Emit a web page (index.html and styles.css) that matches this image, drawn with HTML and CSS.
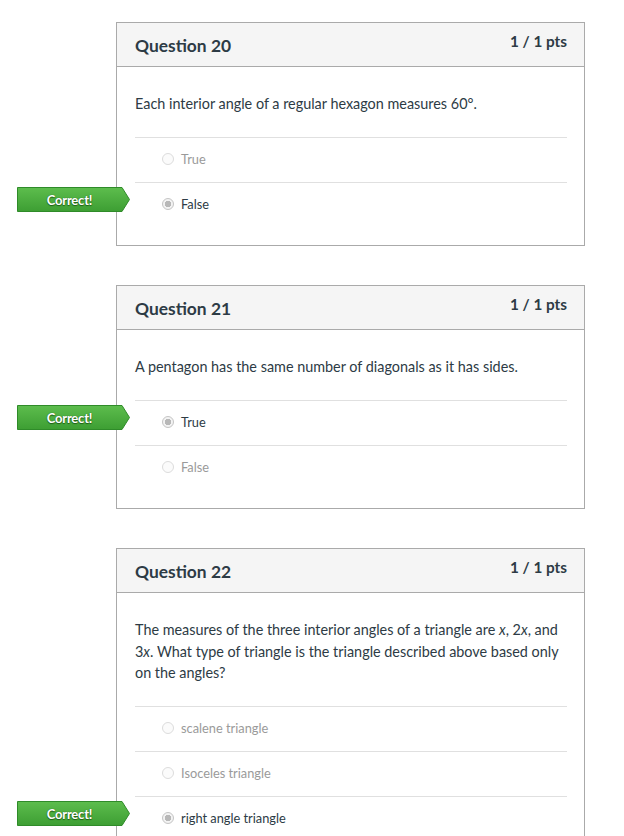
FILE: index.html
```html
<!DOCTYPE html>
<html lang="en">
<head>
<meta charset="utf-8">
<title>Quiz results</title>
<link rel="stylesheet" href="styles.css">
</head>
<body>
<main class="quiz">
  <section class="question">
    <header class="q-header">
      <h2 class="q-name">Question 20</h2>
      <span class="q-pts">1 / 1 pts</span>
    </header>
    <div class="q-body">
      <div class="q-text">Each interior angle of a regular hexagon measures 60°.</div>
      <div class="answers">
        <div class="answer"><span class="radio"></span><span class="label">True</span></div>
        <div class="answer selected">
          <div class="badge"><svg class="badge-shape" viewBox="0 0 113 25" preserveAspectRatio="none"><defs><linearGradient id="g1" x1="0" y1="0" x2="0" y2="1"><stop offset="0" stop-color="#5dbd4d"/><stop offset="1" stop-color="#3d9e33"/></linearGradient></defs><polygon points="0.5,0.5 105,0.5 112.5,12.5 105,24.5 0.5,24.5" fill="url(#g1)" stroke="#2f8b29"/></svg><span class="badge-text">Correct!</span></div>
          <span class="radio"></span><span class="label">False</span>
        </div>
      </div>
    </div>
  </section>

  <section class="question">
    <header class="q-header">
      <h2 class="q-name">Question 21</h2>
      <span class="q-pts">1 / 1 pts</span>
    </header>
    <div class="q-body">
      <div class="q-text">A pentagon has the same number of diagonals as it has sides.</div>
      <div class="answers">
        <div class="answer selected">
          <div class="badge"><svg class="badge-shape" viewBox="0 0 113 25" preserveAspectRatio="none"><defs><linearGradient id="g2" x1="0" y1="0" x2="0" y2="1"><stop offset="0" stop-color="#5dbd4d"/><stop offset="1" stop-color="#3d9e33"/></linearGradient></defs><polygon points="0.5,0.5 105,0.5 112.5,12.5 105,24.5 0.5,24.5" fill="url(#g2)" stroke="#2f8b29"/></svg><span class="badge-text">Correct!</span></div>
          <span class="radio"></span><span class="label">True</span>
        </div>
        <div class="answer"><span class="radio"></span><span class="label">False</span></div>
      </div>
    </div>
  </section>

  <section class="question">
    <header class="q-header">
      <h2 class="q-name">Question 22</h2>
      <span class="q-pts">1 / 1 pts</span>
    </header>
    <div class="q-body">
      <div class="q-text">The measures of the three interior angles of a triangle are <i>x</i>, 2<i>x</i>, and 3<i>x</i>. What type of triangle is the triangle described above based only on the angles?</div>
      <div class="answers">
        <div class="answer"><span class="radio"></span><span class="label">scalene triangle</span></div>
        <div class="answer"><span class="radio"></span><span class="label">Isoceles triangle</span></div>
        <div class="answer selected">
          <div class="badge"><svg class="badge-shape" viewBox="0 0 113 25" preserveAspectRatio="none"><defs><linearGradient id="g3" x1="0" y1="0" x2="0" y2="1"><stop offset="0" stop-color="#5dbd4d"/><stop offset="1" stop-color="#3d9e33"/></linearGradient></defs><polygon points="0.5,0.5 105,0.5 112.5,12.5 105,24.5 0.5,24.5" fill="url(#g3)" stroke="#2f8b29"/></svg><span class="badge-text">Correct!</span></div>
          <span class="radio"></span><span class="label">right angle triangle</span>
        </div>
      </div>
    </div>
  </section>
</main>
</body>
</html>
```

FILE: styles.css
```css
html, body {
  margin: 0;
  padding: 0;
  background: #ffffff;
}

body {
  font-family: Lato, "Liberation Sans", sans-serif;
  color: #2d3b45;
}

.quiz {
  padding: 22px 0 0 116px;
  width: 469px;
}

.question {
  border: 1px solid #aaaaaa;
  margin-bottom: 39px;
  background: #fff;
}

.q-header {
  display: flex;
  justify-content: space-between;
  align-items: flex-start;
  background: #f5f5f5;
  border-bottom: 1px solid #aaaaaa;
  height: 43px;
  padding: 0 17px 0 18px;
}

.q-name {
  margin: 0;
  font-size: 17.4px;
  font-weight: 700;
  line-height: 20px;
  padding-top: 13px;
  color: #2d3b45;
}

.q-pts {
  font-size: 15.3px;
  font-weight: 700;
  line-height: 18px;
  padding-top: 9px;
  color: #2d3b45;
}

.q-body {
  padding: 0 17px 18px 18px;
}

.q-text {
  font-size: 14.4px;
  line-height: 21.5px;
  padding: 26px 0 22.5px;
}

.q-text i {
  font-style: italic;
}

.answers {
  display: flex;
  flex-direction: column;
}

.answer {
  position: relative;
  display: flex;
  align-items: flex-start;
  box-sizing: border-box;
  height: 45px;
  border-top: 1px solid #e0e0e0;
  padding: 12.5px 0 0 27px;
  font-size: 12.8px;
  color: #9a9a9a;
}

.answer.selected {
  color: #2d3b45;
}

.radio {
  width: 10px;
  height: 10px;
  border-radius: 50%;
  border: 1px solid #dcdcdc;
  background: #fbfbfb;
  margin: 2px 7px 0 0;
  box-sizing: content-box;
  flex: none;
}

.answer.selected .radio {
  border-color: #c4c4c4;
  background: radial-gradient(circle, #b8b8b8 0 3px, #f3f3f3 3.5px);
}

.label {
  line-height: 16px;
}

.badge {
  position: absolute;
  left: -118px;
  top: 4px;
  width: 113px;
  height: 25px;
  display: flex;
  align-items: center;
  justify-content: center;
}

.badge-shape {
  position: absolute;
  inset: 0;
  width: 113px;
  height: 25px;
}

.badge-text {
  position: relative;
  margin-right: 8px;
  color: #ffffff;
  font-size: 13px;
  font-weight: 700;
  letter-spacing: -0.2px;
  text-shadow: 0 0 1px #1f5e16, 0 1px 1px #1f5e16;
}
```
